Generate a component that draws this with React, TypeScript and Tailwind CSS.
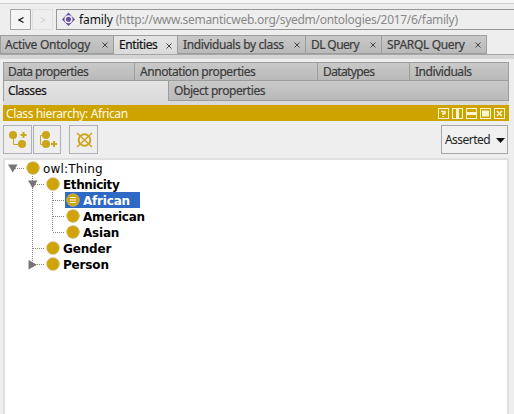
import React from "react";

const UI = "font-['Noto_Sans','Open_Sans',sans-serif]";

type TabProps = { label: string; className: string; text?: string; active?: boolean; closable?: boolean };

function Tab({ label, className, text = "", active = false, closable = false }: TabProps) {
  return (
    <div
      className={`flex items-center whitespace-nowrap border-[#9b9f9b] text-[12px] leading-none ${
        active
          ? "bg-linear-to-b from-[#e4e4e4] to-[#dadada] text-[#151515]"
          : "border-b bg-linear-to-b from-[#c9c9c9] to-[#b9b9b9] text-[#3b3b3b]"
      } [-webkit-text-stroke:0.2px_currentColor] ${className}`}
    >
      <span className={text}>{label}</span>
      {closable && (
        <svg className="ml-auto mr-[5px] mt-px shrink-0" width="6" height="6" viewBox="0 0 6 6">
          <path d="M.5.5l5 5M5.5.5l-5 5" stroke="#444" strokeWidth="1" />
        </svg>
      )}
    </div>
  );
}

type RowProps = {
  label: string;
  depth: number;
  text?: string;
  arrow?: "down" | "right";
  selected?: boolean;
  trunk?: boolean;
  last?: boolean;
};

function TreeRow({ label, depth, text = "", arrow, selected = false, trunk = false, last = false }: RowProps) {
  const cx = 28 + depth * 20;
  const spine = cx - 20.5;
  const dots = { stroke: "#8a8a8a", strokeDasharray: "1 1", strokeWidth: 1 };
  return (
    <div className="flex h-4 items-center">
      <svg width={cx - 8} height="16" className="shrink-0" shapeRendering="crispEdges">
        {depth > 0 && <path d={`M${spine} 0V${last ? 8 : 16}`} {...dots} />}
        {trunk && <path d="M27.5 0V16" {...dots} />}
        <path d={`M${spine} 8.5H${cx - 8}`} {...dots} />
        {arrow === "down" && <path d={`M${spine - 4.5} 4.5h9.5l-4.75 8z`} fill="#767676" shapeRendering="auto" />}
        {arrow === "right" && <path d={`M${spine - 4} 4v9.5l8.5-4.75z`} fill="#767676" shapeRendering="auto" />}
      </svg>
      <div className={`flex h-4 items-center ${selected ? "w-[75px] bg-[#2f69c6] text-white" : "text-black"}`}>
        <svg width="15" height="16" className="shrink-0">
          <circle cx="8" cy="8" r="6.3" fill="#d0a407" stroke="#c9b877" strokeWidth="0.8" />
          {selected && <path d="M5 5.500h6M5 8h6M5 10.500h6" stroke="#fff8d8" />}
        </svg>
        <span className={`ml-[3px] whitespace-nowrap pt-0.5 text-[12px] leading-4 ${depth ? "font-bold" : ""} ${text}`}>{label}</span>
      </div>
    </div>
  );
}

function HeaderButton({ children }: { children: React.ReactNode }) {
  return (
    <svg width="11" height="11" viewBox="0 0 11 11" fill="none" stroke="#fff6d2">
      <rect x=".5" y=".5" width="10" height="10" />
      {children}
    </svg>
  );
}

function ToolButton({ className, children }: { className: string; children: React.ReactNode }) {
  return (
    <div className={`flex h-[29px] items-center justify-center border border-[#adb1b7] bg-[#eeeeee] ${className}`}>
      <svg width="26" height="26" viewBox="0 0 26 26" fill="none" stroke="#cda51b" className="shrink-0">
        {children}
      </svg>
    </div>
  );
}

export default function App() {
  return (
    <div className={`flex h-[414px] w-[514px] flex-col overflow-hidden bg-[#eeeeee] ${UI}`}>
      <div className="h-1 border-b border-[#d2d2d2] bg-[#f5f5f5]" />
      <div className="flex h-[31px] pl-[10px] pt-[5px]">
        <div className="flex h-[21px] w-[21px] items-center justify-center border border-[#a5a5a5] bg-[#f5f5f5]">
          <svg width="6" height="8" fill="none" stroke="#111" strokeWidth="1.2"><path d="M5.5 1.5L1 4l4.500 2.500" /></svg>
        </div>
        <div className="ml-px flex h-[21px] w-[21px] items-center justify-center border border-[#e1e1e1]">
          <svg width="6" height="8" fill="none" stroke="#d2d2d2"><path d="M.5 1.500L5 4L.5 6.500" /></svg>
        </div>
        <div className="ml-[3px] flex h-[21px] flex-1 items-center border border-r-0 border-[#969696] pl-1">
          <svg width="15" height="15" viewBox="0 0 15 15" className="shrink-0">
            <path d="M7.500 .5L14 7.500L7.500 14L1 7.500Z" fill="#67509a" />
            <circle cx="7.500" cy="7.300" r="3.300" fill="#67509a" stroke="#f3effa" strokeWidth="1.500" />
          </svg>
          <div className="ml-[3px] flex gap-[3px] whitespace-nowrap pt-px text-[12px] leading-none text-[#888]">
            <span className="tracking-[-0.1px] text-[#111]">family</span>
            <span className="tracking-[-0.29px]">(http://www.semanticweb.org/syedm/ontologies/2017/6/family)</span>
          </div>
        </div>
      </div>

      <div className="flex h-5 shrink-0 border-b border-[#a5a5a5]">
        <Tab label="Active Ontology" text="tracking-[-0.27px]" closable className="w-[113px] border-l border-t pl-1" />
        <Tab label="Entities" text="tracking-[-0.38px]" closable active className="w-16 border-l border-t pl-[5px]" />
        <Tab label="Individuals by class" text="tracking-[-0.37px]" closable className="w-32 border-l border-t pl-[5px]" />
        <Tab label="DL Query" text="tracking-[-0.6px]" closable className="w-[76px] border-l border-t pl-[5px]" />
        <Tab label="SPARQL Query" text="tracking-[-0.35px]" closable className="w-[106px] border-x border-t pl-[5px]" />
      </div>
      <div className="h-1 shrink-0 bg-[#d6d6d6]" />

      <div className="flex min-h-0 flex-1 flex-col pl-[3px] pr-[5px] pt-[3px]">
        <div className="flex h-[19px] shrink-0">
          <Tab label="Data properties" text="tracking-[-0.53px]" className="w-[131px] border-l border-t pl-1" />
          <Tab label="Annotation properties" text="tracking-[-0.43px]" className="w-[183px] border-l border-t pl-[5px]" />
          <Tab label="Datatypes" text="tracking-[-0.62px]" className="w-[92px] border-l border-t pl-[5px]" />
          <Tab label="Individuals" text="tracking-[-0.45px]" className="w-[100px] border-x border-t pl-[5px]" />
        </div>
        <div className="flex h-5 shrink-0">
          <Tab label="Classes" text="tracking-[-0.45px]" active className="w-[165px] border-l pl-1" />
          <Tab label="Object properties" text="tracking-[-0.42px]" className="w-[341px] border-x pl-[5px]" />
        </div>
        <div className="h-1 shrink-0 bg-[#dadada]" />

        <div className="flex h-4 shrink-0 items-center bg-[#cea300] pl-[3px] pr-1 text-[12px] leading-none text-[#fffbe8]">
          <span className="pt-px tracking-[-0.38px]">Class hierarchy: African</span>
          <div className="ml-auto flex gap-[3px]">
            <HeaderButton><path d="M3 3.500h4v2H5v1.500M5 8v1" strokeWidth="1.500" /></HeaderButton>
            <HeaderButton><path d="M5.500 1v9" strokeWidth="3" /></HeaderButton>
            <HeaderButton><path d="M1 5.500h9" strokeWidth="3" /></HeaderButton>
            <HeaderButton><path d="M2 5.500h7" strokeWidth="6" /></HeaderButton>
            <HeaderButton><path d="M3 3l5 5M8 3L3 8" strokeWidth="1.700" /></HeaderButton>
          </div>
        </div>

        <div className="flex h-[37px] shrink-0 pt-1">
          <ToolButton className="w-[29px]">
            <circle cx="8" cy="8" r="4" fill="#cda51b" stroke="none" />
            <circle cx="17" cy="17" r="4" fill="#cda51b" stroke="none" />
            <path d="M8.500 11v6.500H14" />
            <path d="M18.500 5v6M15.500 8h6" strokeWidth="2" />
          </ToolButton>
          <ToolButton className="ml-px w-7">
            <circle cx="12" cy="8" r="4" fill="#cda51b" stroke="none" />
            <circle cx="12" cy="17" r="4" fill="#cda51b" stroke="none" />
            <path d="M9 8.500H6.500v9H9" />
            <path d="M20 14v6M17 17h6" strokeWidth="2" />
          </ToolButton>
          <ToolButton className="ml-[8px] w-[29px]">
            <circle cx="13.500" cy="13" r="5.800" strokeWidth="2" />
            <path d="M6 6l15 14M21 6l-15 14" strokeWidth="1.500" />
          </ToolButton>
          <div className="ml-auto mr-px flex h-[29px] w-[67px] items-center border border-[#a7a7a7] bg-[#f0f0f0] pl-[3px] text-[12px] text-[#222]">
            <span className="pt-px tracking-[-0.55px]">Asserted</span>
            <svg width="9" height="5" className="ml-auto mr-[2px] mt-px shrink-0"><path d="M0 0h9L4.500 5z" fill="#111" /></svg>
          </div>
        </div>

        <div className="min-h-0 flex-1 border-x-2 border-t-2 border-[#e0e0e0] bg-white font-['DejaVu_Sans',sans-serif]">
          <TreeRow label="owl:Thing" depth={0} arrow="down" text="tracking-[0.2px]" />
          <TreeRow label="Ethnicity" depth={1} arrow="down" text="tracking-[-0.4px]" />
          <TreeRow label="African" depth={2} trunk selected text="tracking-[-0.2px]" />
          <TreeRow label="American" depth={2} trunk text="tracking-[-0.23px]" />
          <TreeRow label="Asian" depth={2} trunk last text="tracking-[-0.2px]" />
          <TreeRow label="Gender" depth={1} text="tracking-[-0.17px]" />
          <TreeRow label="Person" depth={1} arrow="right" last text="tracking-[-0.17px]" />
        </div>
      </div>
    </div>
  );
}
